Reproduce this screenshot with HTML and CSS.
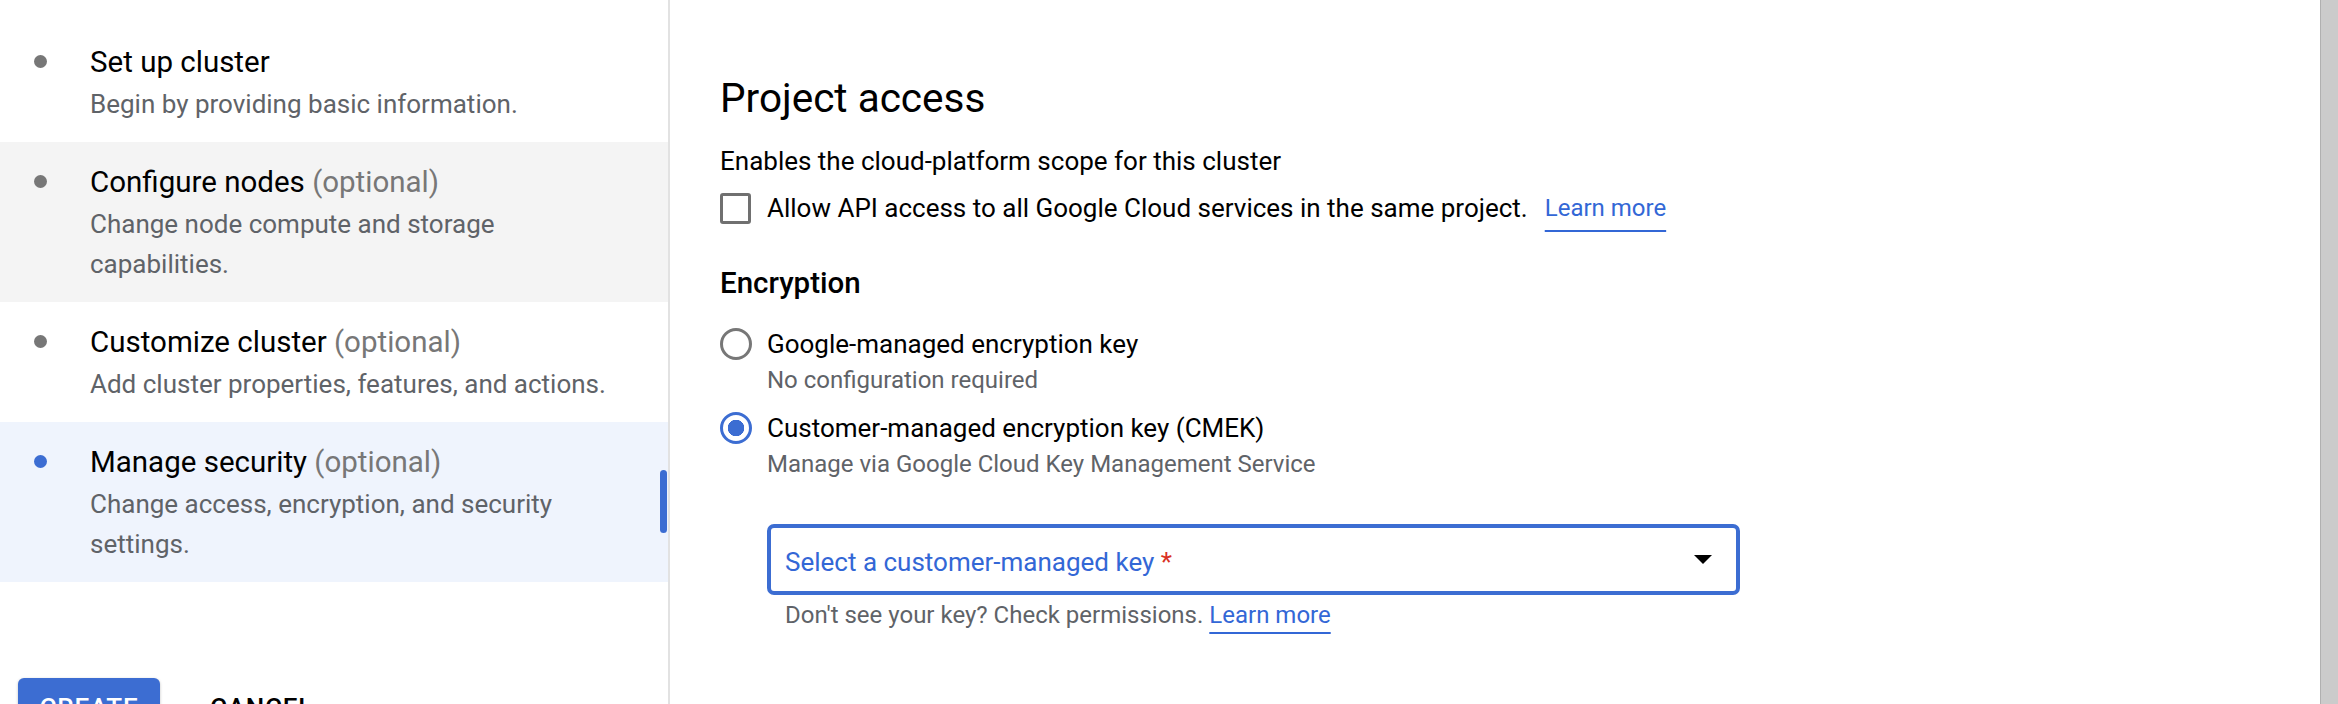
FILE: index.html
```html
<!DOCTYPE html>
<html lang="en">

<head>
    <meta charset="UTF-8">
    <meta name="viewport" content="width=device-width, initial-scale=1.0">
    <title>Create cluster - Manage security</title>
    <link rel="stylesheet" href="styles.css">
</head>

<body>
    <div class="page">
        <nav class="stepper">
            <ol class="steps">
                <li class="step">
                    <span class="dot"></span>
                    <div class="step-text">
                        <div class="step-title">Set up cluster</div>
                        <div class="step-desc">Begin by providing basic information.</div>
                    </div>
                </li>
                <li class="step step-hover">
                    <span class="dot"></span>
                    <div class="step-text">
                        <div class="step-title">Configure nodes <span class="optional">(optional)</span></div>
                        <div class="step-desc">Change node compute and storage capabilities.</div>
                    </div>
                </li>
                <li class="step">
                    <span class="dot"></span>
                    <div class="step-text">
                        <div class="step-title">Customize cluster <span class="optional">(optional)</span></div>
                        <div class="step-desc">Add cluster properties, features, and actions.</div>
                    </div>
                </li>
                <li class="step step-active">
                    <span class="dot"></span>
                    <div class="step-text">
                        <div class="step-title">Manage security <span class="optional">(optional)</span></div>
                        <div class="step-desc">Change access, encryption, and security settings.</div>
                    </div>
                    <span class="scroll-thumb"></span>
                </li>
            </ol>
            <div class="actions">
                <button class="btn-primary">CREATE</button>
                <button class="btn-text">CANCEL</button>
            </div>
        </nav>

        <main class="content">
            <h2 class="section-title">Project access</h2>
            <p class="body-text">Enables the cloud-platform scope for this cluster</p>
            <label class="check-row">
                <span class="checkbox"></span>
                <span class="body-text">Allow API access to all Google Cloud services in the same project.</span>
                <a class="link" href="#">Learn more</a>
            </label>

            <h3 class="sub-title">Encryption</h3>
            <div class="radio-group">
                <label class="option">
                    <span class="radio"></span>
                    <span class="option-label">Google-managed encryption key</span>
                    <span class="option-hint">No configuration required</span>
                </label>
                <label class="option">
                    <span class="radio radio-on"></span>
                    <span class="option-label">Customer-managed encryption key (CMEK)</span>
                    <span class="option-hint">Manage via Google Cloud Key Management Service</span>
                </label>
            </div>

            <div class="key-field">
                <div class="select-box">
                    <span class="placeholder">Select a customer-managed key <span class="required">*</span></span>
                    <span class="arrow"></span>
                </div>
                <p class="help-text">Don't see your key? Check permissions. <a class="link link-small" href="#">Learn more</a></p>
            </div>
        </main>

        <div class="scrollbar"></div>
    </div>
</body>

</html>
```

FILE: styles.css
```css
html,
body {
    margin: 0;
    height: 100%;
    overflow: hidden;
}

body {
    background-color: #fff;
    color: #202124;
    font-family: Roboto, 'Noto Sans', Arial, sans-serif;
}

.page {
    display: flex;
    height: 704px;
}

/* Left stepper */
.stepper {
    width: 668px;
    flex-shrink: 0;
    border-right: 2px solid #e2e2e2;
    padding-top: 22px;
}

.steps {
    list-style: none;
    margin: 0;
    padding: 0;
}

.step {
    position: relative;
    display: grid;
    grid-template-columns: 90px 1fr;
    padding: 18px 48px 18px 0;
}

.step-hover {
    background-color: #f4f4f4;
}

.step-active {
    background-color: #eff4fd;
}

.dot {
    width: 13px;
    height: 13px;
    border-radius: 50%;
    background-color: #777;
    margin: 15px 0 0 34px;
}

.step-active .dot {
    background-color: #3c6dd2;
}

.step-title {
    font-size: 29.5px;
    line-height: 44px;
    color: #000;
}

.optional {
    color: #777;
}

.step-desc {
    font-size: 26px;
    line-height: 40px;
    color: #5f6368;
}

.scroll-thumb {
    position: absolute;
    right: 1px;
    top: 48px;
    width: 7px;
    height: 63px;
    border-radius: 4px;
    background-color: #3c6dd2;
}

.actions {
    display: flex;
    margin-top: 96px;
    padding-left: 18px;
}

.btn-primary {
    width: 142px;
    height: 60px;
    border: none;
    border-radius: 6px;
    background-color: #3c6dd2;
    color: #fff;
    font-family: Roboto, sans-serif;
    font-size: 26px;
    font-weight: 500;
    letter-spacing: 0.03em;
    box-shadow: 0 1px 3px rgba(0, 0, 0, 0.25);
}

.btn-text {
    height: 60px;
    margin-left: 37px;
    padding: 0 13px;
    border: none;
    background: none;
    color: #000;
    font-family: Roboto, sans-serif;
    font-size: 26px;
    font-weight: 500;
    letter-spacing: 0.03em;
}

/* Main form */
.content {
    flex: 1;
    padding: 74px 0 0 50px;
}

.section-title {
    margin: 0;
    font-size: 40.5px;
    font-weight: 400;
    line-height: 48px;
    color: #000;
}

.body-text {
    margin: 21px 0 0;
    font-size: 26px;
    line-height: 36px;
    color: #000;
}

.check-row {
    display: flex;
    align-items: center;
    margin-top: 13px;
    height: 32px;
}

.check-row .body-text {
    margin: 0;
    line-height: 32px;
}

.checkbox {
    box-sizing: border-box;
    width: 31px;
    height: 31px;
    margin: 1px 16px 0 0;
    border: 3px solid #707070;
    border-radius: 3px;
}

.link {
    color: #3367d6;
    text-decoration: underline;
    text-decoration-thickness: 2px;
    text-underline-offset: 14px;
    font-size: 24px;
}

.check-row .link {
    margin-left: 17px;
}

.sub-title {
    margin: 41px 0 0;
    font-size: 29.5px;
    font-weight: 500;
    line-height: 36px;
    color: #000;
}

.radio-group {
    margin-top: 25px;
}

.option {
    display: grid;
    grid-template-columns: 32px 1fr;
    column-gap: 15px;
    margin-bottom: 12px;
}

.radio {
    box-sizing: border-box;
    width: 32px;
    height: 32px;
    margin-top: 2px;
    border: 3px solid #777;
    border-radius: 50%;
}

.radio-on {
    border-color: #3c6dd2;
    background: radial-gradient(circle, #3c6dd2 0 8px, transparent 8.5px);
}

.option-label {
    font-size: 26px;
    line-height: 36px;
    color: #000;
}

.option-hint {
    grid-column: 2;
    font-size: 24px;
    line-height: 36px;
    color: #5f6368;
}

.key-field {
    margin: 42px 0 0 47px;
}

.select-box {
    box-sizing: border-box;
    display: flex;
    align-items: center;
    justify-content: space-between;
    width: 973px;
    height: 71px;
    padding: 5px 24px 0 14px;
    border: 4px solid #3c6dd2;
    border-radius: 7px;
}

.placeholder {
    font-size: 26px;
    color: #3367d6;
}

.required {
    color: #d93025;
}

.arrow {
    width: 0;
    height: 0;
    margin-top: -5px;
    border-left: 9px solid transparent;
    border-right: 9px solid transparent;
    border-top: 9px solid #000;
}

.help-text {
    margin: 4px 0 0 18px;
    font-size: 24px;
    line-height: 32px;
    color: #5f6368;
}

.link-small {
    text-underline-offset: 9px;
}

.scrollbar {
    width: 17px;
    flex-shrink: 0;
    background-color: #cbcbcb;
    border-left: 1px solid #b0b0b0;
}
```
